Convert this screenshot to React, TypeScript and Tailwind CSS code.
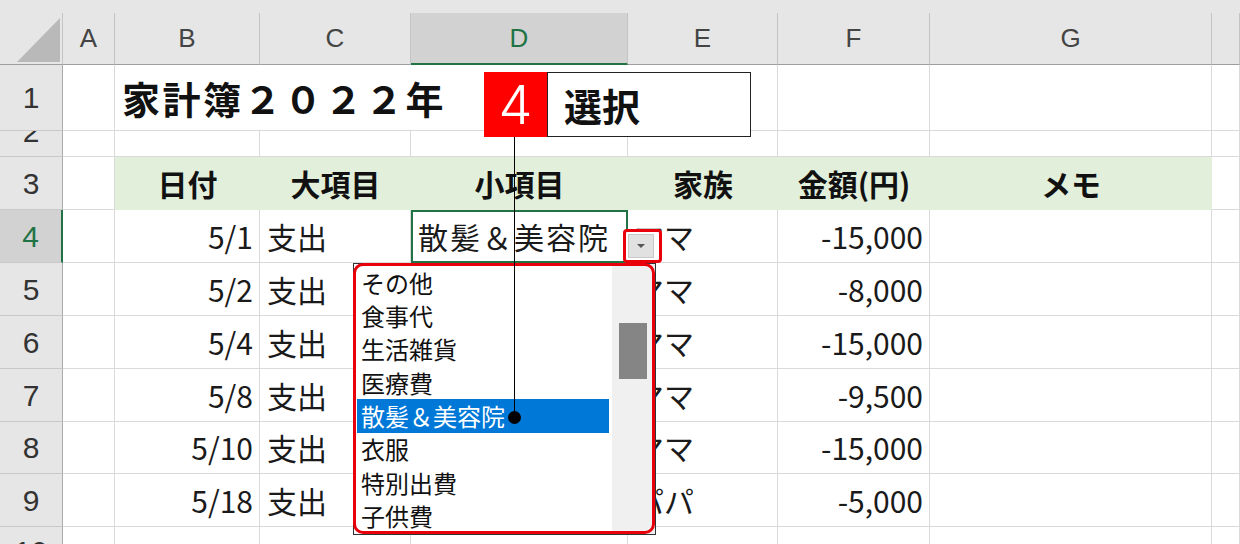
import React from 'react';

// spreadsheet column widths: row head, A, B, C, D, E, F, G, H
const GRID = 'grid grid-cols-[63px_52px_145px_151px_217px_150px_152px_282px_1fr]';
const JP = "font-['Noto_Sans_CJK_JP',sans-serif]";
const LATIN = "font-['Liberation_Sans',Arial,sans-serif]";

const COL_LETTERS = ['A', 'B', 'C', 'D', 'E', 'F', 'G', ''];

const ROWS = [
  { n: 4, h: 'h-[53px]', date: '5/1', big: '支出', small: '散髪＆美容院', family: 'ママ', amount: '-15,000' },
  { n: 5, h: 'h-[53px]', date: '5/2', big: '支出', small: '', family: 'ママ', amount: '-8,000' },
  { n: 6, h: 'h-[53px]', date: '5/4', big: '支出', small: '', family: 'ママ', amount: '-15,000' },
  { n: 7, h: 'h-[53px]', date: '5/8', big: '支出', small: '', family: 'ママ', amount: '-9,500' },
  { n: 8, h: 'h-[52px]', date: '5/10', big: '支出', small: '', family: 'ママ', amount: '-15,000' },
  { n: 9, h: 'h-[53px]', date: '5/18', big: '支出', small: '', family: 'パパ', amount: '-5,000' },
];

const ITEMS = ['その他', '食事代', '生活雑貨', '医療費', '散髪＆美容院', '衣服', '特別出費', '子供費'];

function Cell({ children, className = '' }: { children?: React.ReactNode; className?: string }) {
  return (
    <div className={`flex items-center overflow-hidden whitespace-nowrap border-r border-b border-[#dadada] ${className}`}>
      {children}
    </div>
  );
}

function RowHead({ n, active = false }: { n: number; active?: boolean }) {
  return (
    <div
      className={`flex items-center justify-center border-b border-b-[#c9c9c9] text-[30px] ${LATIN} ${
        active ? 'bg-[#d2d2d2] text-[#217346] border-r-2 border-r-[#217346]' : 'bg-[#e6e6e6] text-[#333] border-r border-r-[#ababab]'
      }`}
    >
      {n}
    </div>
  );
}

export default function App() {
  return (
    <div className={`relative h-[544px] w-[1240px] overflow-hidden bg-white ${JP}`}>
      {/* column header */}
      <div className="h-[13px] bg-[#e6e6e6]" />
      <div className={`${GRID} h-[52px] bg-[#e6e6e6] text-[26px] ${LATIN}`}>
        <div className="border-r border-b border-r-[#c4c4c4] border-b-[#9e9e9e]">
          <svg width="62" height="51" viewBox="0 0 62 51">
            <polygon points="17,49 60,49 60,5" fill="#b9b9b9" />
          </svg>
        </div>
        {COL_LETTERS.map((l, i) =>
          l === 'D' ? (
            <div
              key={i}
              className="flex items-center justify-center border-r border-r-[#c4c4c4] border-b-2 border-b-[#217346] bg-[#d2d2d2] text-[#217346]"
            >
              {l}
            </div>
          ) : (
            <div key={i} className="flex items-center justify-center border-r border-b border-r-[#c4c4c4] border-b-[#9e9e9e] text-[#444]">
              {l}
            </div>
          )
        )}
      </div>

      {/* row 1: title */}
      <div className={`${GRID} h-[66px]`}>
        <RowHead n={1} />
        <Cell />
        <Cell className="col-span-4 pl-[7px] text-[38px] font-bold tracking-[2.5px] text-[#111]">家計簿２０２２年</Cell>
        <Cell />
        <Cell />
        <Cell />
      </div>

      {/* row 2: squashed */}
      <div className={`${GRID} h-[26px]`}>
        <div className={`flex justify-center overflow-hidden border-r border-b border-r-[#ababab] border-b-[#c9c9c9] bg-[#e6e6e6] text-[30px] leading-[30px] text-[#333] ${LATIN}`}>
          <span className="-mt-[14px]">2</span>
        </div>
        {Array.from({ length: 8 }).map((_, i) => (
          <Cell key={i} />
        ))}
      </div>

      {/* row 3: table header */}
      <div className={`${GRID} h-[53px]`}>
        <RowHead n={3} />
        <Cell />
        {['日付', '大項目', '小項目', '家族', '金額(円)', 'メモ'].map((t) => (
          <div key={t} className="flex items-center justify-center bg-[#e2efda] text-[30px] font-bold text-[#111]">
            {t}
          </div>
        ))}
        <Cell />
      </div>

      {/* data rows */}
      {ROWS.map((r) => (
        <div key={r.n} className={`${GRID} ${r.h} text-[30px] text-[#1a1a1a]`}>
          <RowHead n={r.n} active={r.n === 4} />
          <Cell />
          <Cell className="justify-end pr-[6px]">{r.date}</Cell>
          <Cell className="pl-[7px]">{r.big}</Cell>
          {r.n === 4 ? (
            <div className="flex items-center whitespace-nowrap border-2 border-[#217346] pl-[5px] tracking-[2px]">{r.small}</div>
          ) : (
            <Cell />
          )}
          <Cell className="pl-[6px]">{r.family}</Cell>
          <Cell className="justify-end pr-[6px]">{r.amount}</Cell>
          <Cell />
          <Cell />
        </div>
      ))}

      {/* row 10 (cut off) */}
      <div className={`${GRID} h-[17px]`}>
        <div className={`flex justify-center overflow-hidden border-r border-r-[#ababab] bg-[#e6e6e6] text-[30px] leading-[30px] text-[#333] ${LATIN}`}>
          <span className="mt-[10px]">10</span>
        </div>
        {Array.from({ length: 8 }).map((_, i) => (
          <div key={i} className="border-r border-[#dadada]" />
        ))}
      </div>

      {/* dropdown button */}
      <div className="absolute left-[623px] top-[229px] h-[34px] w-[39px] rounded-[4px] border-[3px] border-[#e8000b] bg-white pl-[2px] pt-[2px]">
        <div className="flex h-[24px] w-[26px] items-center justify-center border border-[#c8c8c8] bg-[#e1e1e1]">
          <svg width="10" height="6" viewBox="0 0 10 6">
            <polygon points="1,1 9,1 5,5" fill="#555" />
          </svg>
        </div>
      </div>

      {/* dropdown list */}
      <div className="absolute left-[353px] top-[263px] flex h-[272px] w-[303px] overflow-hidden border border-[#333] bg-white">
        <div className="flex-1 pt-[2px] pl-[3px] pr-[3px]">
          {ITEMS.map((it, i) => (
            <div
              key={it}
              className={`flex h-[33.33px] items-center pl-[4px] text-[24px] leading-none whitespace-nowrap ${
                i === 4 ? 'bg-[#0078d7] text-white' : 'text-[#111]'
              }`}
            >
              {it}
            </div>
          ))}
        </div>
        <div className="w-[43px] bg-[#f0f0f0] pl-[7px] pt-[59px]">
          <div className="h-[56px] w-[28px] bg-[#858585]" />
        </div>
      </div>
      <div className="pointer-events-none absolute left-[353px] top-[263px] h-[271px] w-[302px] rounded-[10px] border-[3px] border-[#e8000b]" />

      {/* callout leader */}
      <div className="absolute left-[514px] top-[137px] h-[281px] w-px bg-black" />
      <div className="absolute left-[508px] top-[411px] h-[13px] w-[13px] rounded-full bg-black" />

      {/* callout */}
      <div className="absolute left-[484px] top-[72px] flex h-[65px]">
        <div className="flex w-[63px] items-center justify-center bg-[#ff0000] font-['Inter',sans-serif] text-[54px] font-light text-white">
          4
        </div>
        <div className="flex w-[204px] items-center border border-[#222] bg-white pl-[16px] text-[38px] font-bold text-[#111]">
          選択
        </div>
      </div>
    </div>
  );
}
